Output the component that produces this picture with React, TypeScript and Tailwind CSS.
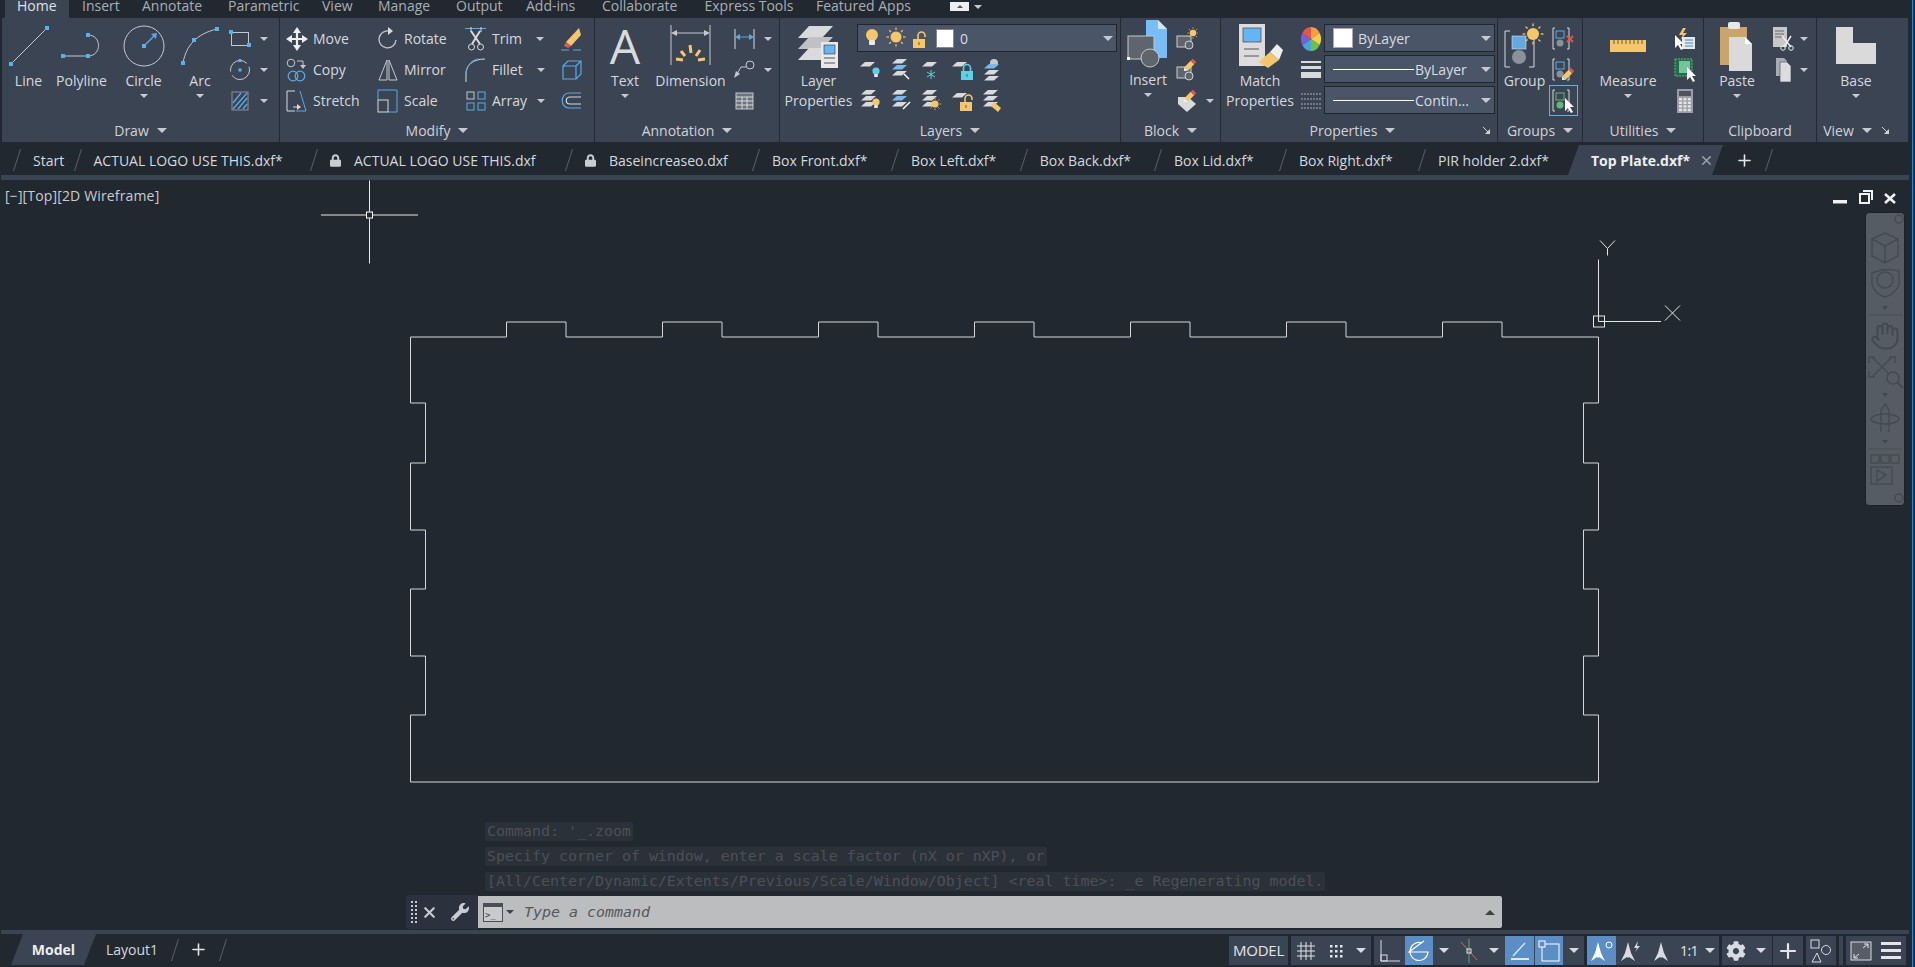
import React from "react";
import { Hand, Plus, X } from "lucide-react";
import { FaCog, FaLock, FaWrench } from "react-icons/fa";

const GRAY = "#c4c8ce";
const LIGHT = "#d9dadc";
const BLUE = "#5aa9e6";
const YEL = "#f6c66b";

const Svg = ({ w, h, children }: { w: number; h: number; children: React.ReactNode }) => (
  <svg width={w} height={h} viewBox={`0 0 ${w} ${h}`} fill="none" className="block shrink-0">
    {children}
  </svg>
);

const Grip = ({ x, y }: { x: number; y: number }) => <rect x={x - 2} y={y - 2} width={4} height={4} fill="#58b0ee" />;

const caretSizes = {
  3: "border-x-[3px] border-t-[3px]",
  4: "border-x-[4px] border-t-[4px]",
  5: "border-x-[5px] border-t-[5px]",
};

const Caret = ({ className = "", size = 4, tone = "border-t-[#c6cad0]" }: { className?: string; size?: 3 | 4 | 5; tone?: string }) => (
  <span className={`inline-block shrink-0 w-0 h-0 border-x-transparent ${caretSizes[size]} ${tone} ${className}`} />
);

// ---- layer bits
const Sheet = ({ x, y, fill = LIGHT }: { x: number; y: number; fill?: string }) => (
  <polygon points={`${x + 5},${y} ${x + 15},${y} ${x + 10},${y + 4.5} ${x},${y + 4.5}`} fill={fill} />
);
const Bulb = ({ x, y, c = YEL, s = 1 }: { x: number; y: number; c?: string; s?: number }) => (
  <g transform={`translate(${x} ${y}) scale(${s})`}>
    <circle cx="0" cy="0" r="6" fill={c} />
    <rect x="-3" y="5" width="6" height="5" rx="1" fill="#e8e8e8" />
  </g>
);
const Sun = ({ x, y, s = 1 }: { x: number; y: number; s?: number }) => (
  <g transform={`translate(${x} ${y}) scale(${s})`} stroke={YEL} strokeWidth="1.2">
    <circle r="5.5" fill={YEL} stroke="none" />
    {[0, 45, 90, 135, 180, 225, 270, 315].map((a) => (
      <line key={a} x1="7" x2="9.5" transform={`rotate(${a})`} />
    ))}
  </g>
);
const Padlock = ({ x, y, c = YEL, open = true }: { x: number; y: number; c?: string; open?: boolean }) => (
  <g transform={`translate(${x} ${y})`}>
    <path d={open ? "M4 6V2.5a3.5 3.5 0 0 1 7 0V4" : "M1.5 6V3a3.5 3.5 0 0 1 7 0V6"} stroke={c} strokeWidth="1.6" />
    <rect x="-1" y="6" width="12" height="9" fill={c} />
    <rect x="4.5" y="9" width="1" height="3" fill="#6b5a2f" />
  </g>
);
const Stack = ({ x, y, top = LIGHT, mid = LIGHT }: { x: number; y: number; top?: string; mid?: string }) => (
  <g>
    <Sheet x={x} y={y} fill={top} />
    <Sheet x={x} y={y + 6} fill={mid} />
    <Sheet x={x} y={y + 12} />
  </g>
);
const Cursor = ({ x, y, c = "#fff" }: { x: number; y: number; c?: string }) => (
  <polygon points={`${x},${y} ${x},${y + 13} ${x + 3},${y + 10} ${x + 6},${y + 15} ${x + 8},${y + 14} ${x + 5},${y + 9} ${x + 9},${y + 9}`} fill={c} />
);
const PencilTip = ({ x, y }: { x: number; y: number }) => (
  <g transform={`translate(${x} ${y}) rotate(45)`}>
    <rect x="-2.5" y="-2" width="5" height="9" fill={YEL} />
    <rect x="-2.5" y="-5" width="5" height="3" fill="#e2574c" />
    <polygon points="-2.5,7 2.5,7 0,10" fill="#eee" />
  </g>
);

// ---- ribbon icons, large
const LineIcon = () => (
  <Svg w={40} h={42}>
    <line x1="2" y1="39" x2="38" y2="3" stroke={GRAY} />
    <Grip x={2} y={39} />
    <Grip x={38} y={3} />
  </Svg>
);
const PolylineIcon = () => (
  <Svg w={44} h={28}>
    <path d="M3 24H28C42 24 42 3 28 3" stroke={GRAY} />
    <Grip x={3} y={24} />
    <Grip x={28} y={24} />
    <Grip x={28} y={3} />
  </Svg>
);
const CircleIcon = () => (
  <Svg w={42} h={42}>
    <circle cx="21" cy="21" r="20" stroke={GRAY} />
    <line x1="21" y1="21" x2="32" y2="10" stroke={BLUE} strokeWidth="1.4" />
    <Grip x={21} y={21} />
    <polygon points="34,8 33,14 28,9" fill={BLUE} />
  </Svg>
);
const ArcIcon = () => (
  <Svg w={40} h={40}>
    <path d="M3 37C6 20 16 8 37 3" stroke={GRAY} />
    <Grip x={3} y={37} />
    <Grip x={14} y={14} />
    <Grip x={37} y={3} />
  </Svg>
);
const RectIcon = () => (
  <Svg w={22} h={18}>
    <rect x="2.5" y="2.5" width="17" height="13" stroke={GRAY} />
    <Grip x={2} y={2} />
    <Grip x={20} y={15} />
  </Svg>
);
const DotCircleIcon = () => (
  <Svg w={22} h={22}>
    <circle cx="11" cy="11" r="9.5" stroke={GRAY} strokeDasharray="24 4" />
    <rect x="9.5" y="9.5" width="3" height="3" fill="#58b0ee" />
    <rect x="9.5" y="0" width="3" height="3" fill="#58b0ee" />
  </Svg>
);
const HatchIcon = () => (
  <Svg w={22} h={24}>
    <rect x="3" y="3" width="16" height="18" stroke="#8b919a" />
    <path d="M4 14L12 4M4 20L18 4M9 20L18 9M14 20L18 15" stroke={BLUE} strokeWidth="1.4" />
  </Svg>
);
const MoveIcon = () => (
  <Svg w={22} h={24}>
    <path d="M11 3V21M2 12H20" stroke="#eceef0" strokeWidth="2.2" />
    <polygon points="11,0 15,6 7,6" fill="#eceef0" />
    <polygon points="11,24 15,18 7,18" fill="#eceef0" />
    <polygon points="0,12 6,8 6,16" fill="#eceef0" />
    <polygon points="22,12 16,8 16,16" fill="#eceef0" />
  </Svg>
);
const RotateIcon = () => (
  <Svg w={20} h={24}>
    <path d="M11 4A8.5 8.5 0 1 0 18 13" stroke={GRAY} strokeWidth="1.3" />
    <polygon points="10,0 15,4 10,8" fill={LIGHT} />
  </Svg>
);
const TrimIcon = () => (
  <Svg w={22} h={24}>
    <path d="M0 1.5H21" stroke={BLUE} />
    <path d="M6 0V5M16 0V5" stroke={LIGHT} />
    <path d="M6 4L15 17M15 4L7 17" stroke={LIGHT} strokeWidth="2" />
    <circle cx="6.5" cy="20" r="3" stroke={LIGHT} />
    <circle cx="15.5" cy="20" r="3" stroke={LIGHT} />
  </Svg>
);
const EraserIcon = () => (
  <Svg w={22} h={24}>
    <polygon points="5,15 18,1 20,8 10,19" fill={YEL} />
    <polygon points="5,15 10,19 7,21 3,19" fill="#e2574c" />
    <path d="M0 23H8M12 23H20" stroke={BLUE} />
  </Svg>
);
const CopyIcon = () => (
  <Svg w={22} h={24}>
    <circle cx="5" cy="5" r="3.8" stroke={GRAY} />
    <path d="M11 3H17V8" stroke={GRAY} />
    <polygon points="14,7 20,7 17,11" fill={GRAY} />
    <circle cx="7" cy="18" r="4.8" stroke={BLUE} strokeWidth="1.3" />
    <circle cx="14" cy="18" r="4.8" stroke={BLUE} strokeWidth="1.3" />
  </Svg>
);
const MirrorIcon = () => (
  <Svg w={20} h={22}>
    <polygon points="9,1 9,21 1,21" stroke={GRAY} />
    <polygon points="11,1 11,21 19,21" stroke={GRAY} />
  </Svg>
);
const StretchIcon = () => (
  <Svg w={22} h={24}>
    <path d="M9 2H1V22H9" stroke={LIGHT} />
    <path d="M14 2L20 22H10" stroke={BLUE} />
    <path d="M7 18H12" stroke={LIGHT} />
    <polygon points="15,18 11,15 11,21" fill={LIGHT} />
  </Svg>
);
const ScaleIcon = () => (
  <Svg w={22} h={24}>
    <path d="M1 11V1H20V23H11" stroke={BLUE} />
    <rect x="1" y="11" width="10" height="12" stroke={LIGHT} />
  </Svg>
);
const FilletIcon = () => (
  <Svg w={22} h={24}>
    <path d="M1 24V16C1 7 8 1 20 1" stroke={LIGHT} />
    <path d="M1 16C1 7 8 1 14 1" stroke={BLUE} />
  </Svg>
);
const ArrayIcon = () => (
  <Svg w={20} h={20}>
    {[0, 11].map((x) =>
      [0, 11].map((y) => <rect key={`${x}${y}`} x={x + 1} y={y + 1} width="7" height="7" stroke={x === 0 && y === 0 ? GRAY : BLUE} />)
    )}
  </Svg>
);
const BoxIcon = () => (
  <Svg w={22} h={22}>
    <path d="M2 7H15V20H2ZM2 7L7 2H20V15L15 20M15 7L20 2" stroke={BLUE} strokeWidth="1.2" />
  </Svg>
);
const OffsetIcon = () => (
  <Svg w={22} h={18}>
    <path d="M20 1H8C-1 1 -1 16 8 16H20" stroke={BLUE} strokeWidth="1.2" />
    <path d="M20 5H9C4 5 4 12 9 12H20" stroke={LIGHT} strokeWidth="1.2" />
  </Svg>
);
const TextIcon = () => (
  <Svg w={40} h={48}>
    <text x="20" y="41.5" textAnchor="middle" fontSize="48" fill={LIGHT}>
      A
    </text>
  </Svg>
);
const DimensionIcon = () => (
  <Svg w={42} h={42}>
    <path d="M1 0V40M40 0V40" stroke={GRAY} />
    <path d="M3 8H38" stroke={GRAY} />
    <polygon points="1,8 7,5 7,11" fill={GRAY} />
    <polygon points="40,8 34,5 34,11" fill={GRAY} />
    <path d="M20 20L21 28M11 26L15 31M30 25L26 31M6 34L13 35M35 34L28 35" stroke={YEL} strokeWidth="3" />
  </Svg>
);
const DimSmall = () => (
  <Svg w={22} h={20}>
    <path d="M1 0V20M20 0V20" stroke={LIGHT} />
    <path d="M3 8H18" stroke={BLUE} />
    <polygon points="1,8 6,5 6,11" fill={BLUE} />
    <polygon points="20,8 15,5 15,11" fill={BLUE} />
  </Svg>
);
const LeaderIcon = () => (
  <Svg w={22} h={20}>
    <circle cx="16" cy="5" r="4" stroke={GRAY} />
    <path d="M12 7H7L3 14" stroke={GRAY} />
    <polygon points="0,18 2,11 6,14" fill={GRAY} />
  </Svg>
);
const TableIcon = () => (
  <Svg w={20} h={18}>
    <rect x="1" y="1" width="17" height="16" fill="#6d737d" stroke={GRAY} />
    <path d="M1 5H18M1 9H18M1 13H18M7 5V17M12 5V17" stroke={LIGHT} />
  </Svg>
);
const LayerPropsIcon = () => (
  <Svg w={42} h={44}>
    <polygon points="11,2 35,2 24,14 0,14" fill={LIGHT} />
    <polygon points="11,13 35,13 24,25 0,25" fill="#bfc1c4" />
    <polygon points="11,24 35,24 24,36 0,36" fill={LIGHT} />
    <rect x="23" y="18" width="17" height="26" fill="#e8e8e8" />
    <rect x="26" y="21" width="11" height="9" fill="#64b5f6" stroke="#333" strokeWidth="0.6" />
    <path d="M26 34H37M26 39H37" stroke="#555" />
  </Svg>
);
const InsertIcon = () => (
  <Svg w={42} h={50}>
    <polygon points="19,0 31,0 40,9 40,38 19,38" fill="#78bdf5" />
    <polygon points="31,0 40,9 31,9" fill="#cfe8fb" />
    <rect x="1" y="16" width="26" height="23" fill="#5f656f" stroke="#c8c8c8" />
    <circle cx="23" cy="38" r="9" fill="#5f656f" stroke="#c8c8c8" />
    <rect x="0" y="37" width="3" height="3" fill="#fff" />
  </Svg>
);
const BlockSmall = ({ kind }: { kind: "star" | "edit" | "tag" }) => (
  <Svg w={22} h={24}>
    {kind === "tag" ? (
      <polygon points="2,8 12,8 20,15 11,23 2,15" fill={LIGHT} />
    ) : (
      <>
        <rect x="1" y="9" width="14" height="11" fill="#5f656f" stroke="#cfcfcf" />
        <circle cx="13" cy="18" r="4" fill="#5f656f" stroke="#cfcfcf" />
      </>
    )}
    {kind === "star" && <Sun x={17} y={6} s={0.6} />}
    {kind !== "star" && <PencilTip x={15} y={6} />}
  </Svg>
);
const MatchIcon = () => (
  <Svg w={46} h={44}>
    <rect x="2" y="0" width="26" height="42" fill="#dcdcdc" />
    <rect x="6" y="4" width="18" height="14" fill="#64b5f6" stroke="#444" strokeWidth="0.7" />
    <path d="M7 25H22M7 32H22" stroke="#555" />
    <polygon points="22,38 33,28 42,36 31,44" fill={YEL} />
    <polygon points="33,28 40,20 46,26 42,36" fill="#eee" />
  </Svg>
);
const WheelIcon = () => (
  <Svg w={22} h={24}>
    {["#f6a13c", "#f4d14a", "#6cc24a", "#4aa3df", "#7a5fd0", "#e2574c"].map((c, i) => {
      const a = (i * Math.PI) / 3 - Math.PI / 2;
      const b = a + Math.PI / 3;
      return <path key={c} d={`M11 12L${11 + 10 * Math.cos(a)} ${12 + 12 * Math.sin(a)}A10 12 0 0 1 ${11 + 10 * Math.cos(b)} ${12 + 12 * Math.sin(b)}Z`} fill={c} />;
    })}
  </Svg>
);
const WeightIcon = () => (
  <Svg w={20} h={20}>
    <rect x="0" y="1" width="20" height="2" fill={LIGHT} />
    <rect x="0" y="6" width="20" height="3" fill={LIGHT} />
    <rect x="0" y="12" width="20" height="6" fill={LIGHT} />
  </Svg>
);
const LinetypeIcon = () => (
  <Svg w={20} h={16}>
    <path d="M0 1H20M0 6H20M0 11H20M0 15H20" stroke="#a9adb3" strokeDasharray="2 1" />
  </Svg>
);
const GroupIcon = () => (
  <Svg w={42} h={46}>
    <path d="M6 8H1V44H6M25 8H30V44H25" stroke={LIGHT} />
    <rect x="8" y="13" width="14" height="13" fill="#64a9e0" stroke="#cfe3f3" strokeWidth="0.6" />
    <circle cx="15" cy="34" r="7" fill="#8b919a" />
    <Sun x={29} y={11} s={1.1} />
  </Svg>
);
const GroupSmall = ({ mark }: { mark: "x" | "pen" | "cur" }) => {
  const blue = mark === "cur" ? "#5fb878" : BLUE;
  return (
    <Svg w={22} h={24}>
      <path d="M3 1H1V22H3M15 1H17V22H15" stroke={LIGHT} />
      <rect x="4" y="4" width="8" height="7" stroke={blue} fill="#3b4453" />
      <circle cx="8" cy="16" r="3.5" fill={mark === "cur" ? "#5fb878" : "#8b919a"} />
      {mark === "x" && <path d="M15 9L21 15M21 9L15 15" stroke="#e2574c" strokeWidth="1.8" />}
      {mark === "pen" && <PencilTip x={17} y={15} />}
      {mark === "cur" && <Cursor x={13} y={9} />}
    </Svg>
  );
};
const RulerIcon = () => (
  <Svg w={36} h={12}>
    <rect x="0" y="0" width="36" height="12" fill={YEL} />
    <path d="M4 0V4M8 0V4M12 0V4M16 0V4M20 0V4M24 0V4M28 0V4M32 0V4" stroke="#6e5a2b" />
  </Svg>
);
const QuickSelect = () => (
  <Svg w={22} h={24}>
    <polygon points="9,1 5,8 9,8 6,13 13,6 9,6 12,1" fill={YEL} />
    <rect x="8" y="10" width="13" height="12" fill="#e8e8e8" />
    <path d="M11 13H19M11 16H19M11 19H19" stroke="#3f87c5" />
    <Cursor x={1} y={8} />
  </Svg>
);
const AreaIcon = () => (
  <Svg w={22} h={24}>
    <rect x="1" y="1" width="17" height="17" fill="#1f6f47" stroke="#5fb878" strokeDasharray="2 1" />
    <rect x="5" y="3" width="11" height="12" fill="#7ac29a" />
    <Cursor x={13} y={9} />
  </Svg>
);
const CalcIcon = () => (
  <Svg w={16} h={24}>
    <rect x="0" y="0" width="16" height="24" fill="#9a9ea5" />
    <rect x="2" y="2" width="12" height="5" fill="#4f545c" />
    {[0, 1, 2].map((c) => [0, 1, 2, 3].map((r) => <rect key={`${c}${r}`} x={2 + c * 4.4} y={9 + r * 3.6} width="3" height="2.4" fill="#e4e4e4" />))}
  </Svg>
);
const PasteIcon = () => (
  <Svg w={34} h={50}>
    <rect x="0" y="6" width="27" height="38" fill="#c9a56b" />
    <rect x="8" y="1" width="12" height="7" rx="2" fill="#e8e8e8" />
    <polygon points="9,16 25,16 32,23 32,50 9,50" fill="#dadada" />
    <polygon points="25,16 32,23 25,23" fill="#fff" />
  </Svg>
);
const CutIcon = () => (
  <Svg w={22} h={24}>
    <rect x="0" y="0" width="14" height="20" fill="#c8c8c8" />
    <path d="M2 4H11M2 7H11M2 10H9" stroke="#666" />
    <path d="M9 9L18 20M18 9L11 20" stroke="#eee" strokeWidth="1.5" />
    <circle cx="10" cy="21" r="2.3" stroke="#eee" />
    <circle cx="18" cy="21" r="2.3" stroke="#eee" />
  </Svg>
);
const CopyClipIcon = () => (
  <Svg w={18} h={24}>
    <polygon points="1,0 9,0 12,3 12,18 1,18" fill="#a9adb3" />
    <polygon points="5,4 12,4 16,8 16,24 5,24" fill="#dcdcdc" stroke="#3b4453" strokeWidth="0.6" />
  </Svg>
);
const BaseIcon = () => (
  <Svg w={40} h={37}>
    <polygon points="0,0 17,0 17,16 40,16 40,37 0,37" fill="#dadada" />
  </Svg>
);
const Launcher = () => (
  <Svg w={9} h={9}>
    <path d="M1 1L7 7" stroke="#cfd3d9" />
    <polygon points="8,3 8,8 3,8" fill="#cfd3d9" />
  </Svg>
);

// ---- ribbon layout helpers
const Big = ({ w, icon, lines, caret, box = "h-[51px]" }: { w: string; icon: React.ReactNode; lines: string[]; caret?: boolean; box?: string }) => (
  <div className={`${w} shrink-0 flex flex-col items-center pt-[2px]`}>
    <div className={`${box} flex items-center justify-center`}>{icon}</div>
    {lines.map((l) => (
      <span key={l} className="leading-[20px] whitespace-nowrap">
        {l}
      </span>
    ))}
    {caret && <Caret className="mt-[3px]" />}
  </div>
);

const Rows = ({ className = "", children }: { className?: string; children: React.ReactNode }) => (
  <div className={`shrink-0 flex flex-col pt-[5px] ${className}`}>{children}</div>
);
const Row = ({ className = "", children }: { className?: string; children?: React.ReactNode }) => (
  <div className={`h-[31px] flex items-center ${className}`}>{children}</div>
);
const Tool = ({ icon, label, caret = "" }: { icon: React.ReactNode; label: string; caret?: string }) => (
  <Row>
    <div className="w-[25px] flex justify-center">{icon}</div>
    <span className="ml-[4px] whitespace-nowrap">{label}</span>
    {caret && <Caret className={caret} />}
  </Row>
);

const Panel = ({ w, title, arrow = true, titleClass = "", launcher = "", children }: { w: string; title: string; arrow?: boolean; titleClass?: string; launcher?: string; children: React.ReactNode }) => (
  <section className={`${w} shrink-0 h-full flex flex-col border-r border-[#232a33] relative`}>
    <div className="h-[100px] flex">{children}</div>
    <div className={`h-[24px] flex items-center justify-center gap-[8px] text-[#cfd3d9] ${titleClass}`}>
      <span>{title}</span>
      {arrow && <Caret size={5} />}
    </div>
    {launcher && (
      <div className={`absolute top-[108px] ${launcher}`}>
        <Launcher />
      </div>
    )}
  </section>
);

const Dropdown = ({ children }: { children: React.ReactNode }) => (
  <div className="h-[28px] bg-[#4a5568] border border-[#1f2630] flex items-center pl-[8px] pr-[3px] text-[#d9dce0]">
    {children}
    <Caret className="ml-auto" size={5} />
  </div>
);
const LineSample = () => <span className="w-[81px] h-px bg-white shrink-0" />;

const Slash = ({ h = 22 }: { h?: number }) => (
  <svg width={8} height={h} viewBox={`0 0 8 ${h}`} className="block shrink-0">
    <line x1="0.5" y1={h} x2="7.5" y2="0" stroke="#59616d" />
  </svg>
);

const menuTabs: [string, string][] = [
  ["Insert", "w-[60px]"],
  ["Annotate", "w-[86px]"],
  ["Parametric", "w-[94px]"],
  ["View", "w-[56px]"],
  ["Manage", "w-[78px]"],
  ["Output", "w-[70px]"],
  ["Add-ins", "w-[76px]"],
  ["Collaborate", "w-[102.5px]"],
  ["Express Tools", "w-[111.5px]"],
  ["Featured Apps", "w-[134px]"],
];

const MenuBar = () => (
  <div className="h-[18px] flex items-start overflow-hidden pl-[5px] text-[#a9aeb6]">
    <div className="w-[64px] h-[18px] bg-[#3b4453] pl-[12px] leading-[12px] text-[#dfe2e6]">Home</div>
    <div className="ml-[13px] flex">
      {menuTabs.map(([t, w]) => (
        <span key={t} className={`${w} leading-[12px] whitespace-nowrap`}>
          {t}
        </span>
      ))}
    </div>
    <div className="mt-[2px] w-[19px] h-[9px] bg-[#eceef0] flex items-center justify-center">
      <Caret className="rotate-180" size={3} tone="border-t-[#555]" />
    </div>
    <Caret className="ml-[5px] mt-[5px]" />
  </div>
);

const Ribbon = () => (
  <div className="h-[124px] ml-[2px] w-[1906px] bg-[#3b4453] flex text-[#d5d9de]">
    <Panel w="w-[278px]" title="Draw">
      <div className="w-[2px]" />
      <Big w="w-[49px]" icon={<LineIcon />} lines={["Line"]} />
      <Big w="w-[57px]" icon={<PolylineIcon />} lines={["Polyline"]} />
      <Big w="w-[67px]" icon={<CircleIcon />} lines={["Circle"]} caret />
      <Big w="w-[46px]" icon={<ArcIcon />} lines={["Arc"]} caret />
      <Rows className="w-[54px] pl-[4px]">
        <Row><div className="w-[26px] flex justify-center"><RectIcon /></div><Caret className="ml-[7px]" /></Row>
        <Row><div className="w-[26px] flex justify-center"><DotCircleIcon /></div><Caret className="ml-[7px]" /></Row>
        <Row><div className="w-[26px] flex justify-center"><HatchIcon /></div><Caret className="ml-[7px]" /></Row>
      </Rows>
    </Panel>
    <Panel w="w-[315px]" title="Modify">
      <Rows className="w-[93px] pl-[4px]">
        <Tool icon={<MoveIcon />} label="Move" />
        <Tool icon={<CopyIcon />} label="Copy" />
        <Tool icon={<StretchIcon />} label="Stretch" />
      </Rows>
      <Rows className="w-[90px] pl-[2px]">
        <Tool icon={<RotateIcon />} label="Rotate" />
        <Tool icon={<MirrorIcon />} label="Mirror" />
        <Tool icon={<ScaleIcon />} label="Scale" />
      </Rows>
      <Rows className="w-[97px]">
        <Tool icon={<TrimIcon />} label="Trim" caret="ml-[14px]" />
        <Tool icon={<FilletIcon />} label="Fillet" caret="ml-[14px]" />
        <Tool icon={<ArrayIcon />} label="Array" caret="ml-[10px]" />
      </Rows>
      <Rows className="w-[24px] items-center">
        <Row><EraserIcon /></Row>
        <Row><BoxIcon /></Row>
        <Row><OffsetIcon /></Row>
      </Rows>
    </Panel>
    <Panel w="w-[185px]" title="Annotation">
      <Big w="w-[60px]" icon={<TextIcon />} lines={["Text"]} caret />
      <Big w="w-[71px]" icon={<DimensionIcon />} lines={["Dimension"]} />
      <Rows className="w-[53px] pl-[7px]">
        <Row><div className="w-[24px] flex justify-center"><DimSmall /></div><Caret className="ml-[7px]" /></Row>
        <Row><div className="w-[24px] flex justify-center"><LeaderIcon /></div><Caret className="ml-[7px]" /></Row>
        <Row><div className="w-[24px] flex justify-center"><TableIcon /></div></Row>
      </Rows>
    </Panel>
    <Panel w="w-[341px]" title="Layers">
      <Big w="w-[77px]" icon={<LayerPropsIcon />} lines={["Layer", "Properties"]} />
      <div className="w-[260px] pt-[6px]">
        <Dropdown>
          <Svg w={69} h={24}>
            <Bulb x={6} y={9} />
            <Sun x={30} y={11} />
            <Padlock x={48} y={7} />
          </Svg>
          <span className="ml-[1px] w-[18px] h-[19px] bg-white border border-[#888]" />
          <span className="ml-[6px]">0</span>
        </Dropdown>
        <div className="mt-[2px] pl-[2px] flex flex-col gap-[1px]">
          <div className="h-[30px] flex items-center gap-[7.5px]">
            <Svg w={23} h={24}><Sheet x={1} y={5} /><Bulb x={17} y={14} c="#5cd0e6" s={0.6} /></Svg>
            <Svg w={23} h={24}><Stack x={2} y={2} mid="#7ab8ec" /><path d="M14 17L19 22" stroke="#fff" strokeWidth="1.4" /></Svg>
            <Svg w={23} h={24}><Sheet x={2} y={5} /><path d="M11 13V22M7 15L15 20M15 15L7 20" stroke="#5cd0e6" /></Svg>
            <Svg w={23} h={24}><Sheet x={1} y={5} /><Padlock x={11} y={8} c="#5cd0e6" open={false} /></Svg>
            <Svg w={23} h={24}><circle cx="13" cy="6" r="4" fill="#c8c8c8" /><Stack x={3} y={7} top="#7ab8ec" /></Svg>
          </div>
          <div className="h-[30px] flex items-center gap-[7.5px]">
            <Svg w={23} h={24}><Stack x={2} y={2} /><Bulb x={17} y={14} s={0.6} /></Svg>
            <Svg w={23} h={24}><Stack x={2} y={2} mid="#7ab8ec" /><path d="M13 21L20 14" stroke="#fff" strokeWidth="1.4" /></Svg>
            <Svg w={23} h={24}><Stack x={2} y={2} /><Sun x={15} y={16} s={0.65} /></Svg>
            <Svg w={23} h={24}><Sheet x={1} y={5} /><Padlock x={10} y={8} /></Svg>
            <Svg w={23} h={24}><Stack x={2} y={2} /><polygon points="13,14 20,20 17,24 10,18" fill={YEL} /></Svg>
          </div>
        </div>
      </div>
    </Panel>
    <Panel w="w-[100px]" title="Block">
      <Big w="w-[54px]" icon={<InsertIcon />} lines={["Insert"]} caret box="h-[50px]" />
      <Rows className="w-[46px]">
        <Row><div className="w-[24px] flex justify-center"><BlockSmall kind="star" /></div></Row>
        <Row><div className="w-[24px] flex justify-center"><BlockSmall kind="edit" /></div></Row>
        <Row><div className="w-[24px] flex justify-center"><BlockSmall kind="tag" /></div><Caret className="ml-[7px]" /></Row>
      </Rows>
    </Panel>
    <Panel w="w-[277px]" title="Properties" titleClass="pr-[13px]" launcher="right-[6px]">
      <Big w="w-[78px]" icon={<MatchIcon />} lines={["Match", "Properties"]} />
      <Rows className="w-[24px] items-center">
        <Row><WheelIcon /></Row>
        <Row><WeightIcon /></Row>
        <Row><LinetypeIcon /></Row>
      </Rows>
      <div className="ml-[1px] w-[171px] pt-[6px] flex flex-col gap-[3px]">
        <Dropdown>
          <span className="w-[20px] h-[20px] bg-white border border-[#aaa]" />
          <span className="ml-[5px]">ByLayer</span>
        </Dropdown>
        <Dropdown>
          <LineSample />
          <span className="ml-[1px]">ByLayer</span>
        </Dropdown>
        <Dropdown>
          <LineSample />
          <span className="ml-[1px]">Contin...</span>
        </Dropdown>
      </div>
    </Panel>
    <Panel w="w-[85px]" title="Groups">
      <Big w="w-[53px]" icon={<GroupIcon />} lines={["Group"]} />
      <Rows className="-ml-[8px] w-[40px] items-center">
        <Row><GroupSmall mark="x" /></Row>
        <Row><GroupSmall mark="pen" /></Row>
        <Row className="w-[29px] border border-[#63aef0] justify-center"><GroupSmall mark="cur" /></Row>
      </Rows>
    </Panel>
    <Panel w="w-[121px]" title="Utilities">
      <Big w="w-[90px]" icon={<RulerIcon />} lines={["Measure"]} caret />
      <Rows className="w-[24px] items-center">
        <Row><QuickSelect /></Row>
        <Row><AreaIcon /></Row>
        <Row><CalcIcon /></Row>
      </Rows>
    </Panel>
    <Panel w="w-[113px]" title="Clipboard" arrow={false}>
      <Big w="w-[66px]" icon={<PasteIcon />} lines={["Paste"]} caret />
      <Rows className="w-[47px]">
        <Row><div className="w-[28px] flex justify-center"><CutIcon /></div><Caret className="ml-[2px]" /></Row>
        <Row><div className="w-[28px] flex justify-center"><CopyClipIcon /></div><Caret className="ml-[2px]" /></Row>
      </Rows>
    </Panel>
    <Panel w="w-[92px]" title="View" titleClass="pr-[30px]" launcher="right-[18px]">
      <Big w="w-[78px]" icon={<BaseIcon />} lines={["Base"]} caret />
    </Panel>
  </div>
);

const fileTabs: { name: string; w: string; locked?: boolean }[] = [
  { name: "Start", w: "w-[60.5px]" },
  { name: "ACTUAL LOGO USE THIS.dxf*", w: "w-[236.5px]" },
  { name: "ACTUAL LOGO USE THIS.dxf", w: "w-[255px]", locked: true },
  { name: "Baseincreaseo.dxf", w: "w-[187px]", locked: true },
  { name: "Box Front.dxf*", w: "w-[139px]" },
  { name: "Box Left.dxf*", w: "w-[128.7px]" },
  { name: "Box Back.dxf*", w: "w-[134.3px]" },
  { name: "Box Lid.dxf*", w: "w-[125px]" },
  { name: "Box Right.dxf*", w: "w-[139px]" },
  { name: "PIR holder 2.dxf*", w: "w-[150px]" },
];

const FileTabs = () => (
  <div className="h-[33px] pl-[13px] pt-[3px] flex items-center text-[#d5d9de]">
    {fileTabs.map((t) => (
      <div key={t.name + t.w} className={`${t.w} shrink-0 flex items-center`}>
        <Slash />
        {t.locked ? (
          <>
            <FaLock className="ml-[12px] w-[11px] h-[13px] text-[#c9cdd2]" />
            <span className="ml-[13px] whitespace-nowrap">{t.name}</span>
          </>
        ) : (
          <span className="ml-[12px] whitespace-nowrap">{t.name}</span>
        )}
      </div>
    ))}
    <div className="w-[155px] h-[30px] shrink-0 bg-[#3b4453] flex items-center pl-[23px] [clip-path:polygon(11px_0,100%_0,calc(100%-11px)_100%,0_100%)]">
      <span className="font-bold text-[#eceef0] whitespace-nowrap">Top Plate.dxf*</span>
      <X size={15} strokeWidth={2.5} className="ml-[9px] text-[#9aa0a8]" />
    </div>
    <Plus size={19} strokeWidth={2} className="ml-[12px] text-[#e4e6e9]" />
    <div className="ml-[11px]"><Slash /></div>
  </div>
);

const tabTopY = 321;
const tabsX = [0, 1, 2, 3, 4, 5, 6].map((i) => 506.5 + i * 156);
const leftNotches: [number, number][] = [[402.5, 462.5], [529.5, 588.5], [655.5, 714.5]];

// outline of the plate, clockwise from the top left corner
const platePath = () => {
  let d = "M410.5 336.5";
  tabsX.forEach((x) => {
    d += `H${x}V${tabTopY}.5H${x + 59.5}V336.5`;
  });
  d += "H1598.5";
  leftNotches.forEach(([a, b]) => {
    d += `V${a}H1583.5V${b}H1598.5`;
  });
  d += "V781.5H410.5";
  [...leftNotches].reverse().forEach(([a, b]) => {
    d += `V${b}H425.5V${a}H410.5`;
  });
  return d + "Z";
};

const Drawing = () => (
  <svg viewBox="0 180 1912 749" className="absolute inset-0 w-full h-full" fill="none">
    <path d={platePath()} stroke="#d4d6d9" />
    {/* crosshair */}
    <path d="M321 214.5H366M372 214.5H418M369.5 180V211M369.5 218V263" stroke="#e8e9ea" />
    <rect x="366.5" y="211.5" width="6" height="6" stroke="#fff" />
    {/* UCS icon */}
    <rect x="1593.5" y="315.5" width="11" height="11" stroke="#e4e5e7" />
    <path d="M1598.5 259V321H1661" stroke="#e4e5e7" />
    <path d="M1600 240L1607.5 248L1615 240M1607.5 248V255" stroke="#e4e5e7" />
    <path d="M1665 305L1680 320M1680 305L1665 320" stroke="#e4e5e7" />
  </svg>
);

const NavBar = () => (
  <div className="absolute right-[7px] top-[32px] w-[40px] h-[294px] bg-[#565c63] rounded-[4px] border border-[#1c2127] flex flex-col items-center text-[#43494f]">
    <Svg w={38} h={290}>
      <g stroke="#454b52" strokeWidth="1.5">
        <circle cx="33" cy="6" r="4" />
        <path d="M6 26L19 20L32 26V43L19 50L6 43Z M6 26L19 33L32 26M19 33V50" />
        <path d="M6 60Q19 54 33 58V72Q28 82 19 84Q10 82 6 72Z" />
        <circle cx="19" cy="67" r="8" />
        <path d="M2 102H36M2 236H36" strokeWidth="0.8" />
        <path d="M6 144L26 164M26 144L6 164" />
        <path d="M3 150V144H9M23 144H29V150M3 158V164H9" />
        <circle cx="27" cy="165" r="6" fill="#565c63" />
        <path d="M31 169L37 175" strokeWidth="2" />
        <path d="M15 197L19 191L23 197M15 219V197M23 219V197" />
        <ellipse cx="19" cy="206" rx="14" ry="5" />
        <rect x="5" y="242" width="8" height="8" />
        <rect x="15" y="242" width="8" height="8" />
        <rect x="25" y="242" width="8" height="8" />
        <rect x="5" y="254" width="21" height="17" />
        <polygon points="11,257 11,268 20,262" />
        <circle cx="33" cy="285" r="4" />
      </g>
      <polygon points="16,93 22,93 19,97" fill="#43494f" />
      <polygon points="16,180 22,180 19,184" fill="#43494f" />
      <polygon points="16,227 22,227 19,231" fill="#43494f" />
    </Svg>
    <div className="absolute left-[4px] top-[108px]">
      <Hand size={30} strokeWidth={1.5} />
    </div>
  </div>
);

const history = [
  "Command: '_.zoom",
  "Specify corner of window, enter a scale factor (nX or nXP), or",
  "[All/Center/Dynamic/Extents/Previous/Scale/Window/Object] <real time>: _e Regenerating model.",
];

const CommandLine = () => (
  <div className="absolute left-[406px] top-[642px] flex flex-col font-['DejaVu_Sans_Mono',monospace] text-[14.95px]">
    <div className="ml-[79px] flex flex-col items-start gap-[6px]">
      {history.map((l) => (
        <div key={l} className="h-[19px] leading-[19px] px-[2px] rounded-[2px] bg-[#2b3139] text-[#4b5058] whitespace-nowrap">
          {l}
        </div>
      ))}
    </div>
    <div className="mt-[4px] h-[34px] flex">
      <div className="w-[72px] h-[34px] bg-[#2b323d] rounded-l-[3px] flex items-center text-[#c8cbd0]">
        <div className="ml-[5px] w-[6px] h-[22px] border-x-2 border-dotted border-[#c8cbd0]" />
        <X size={17} strokeWidth={3} className="ml-[4px]" />
        <FaWrench className="ml-[13px] w-[18px] h-[18px]" />
      </div>
      <div className="mt-[1px] w-[1024px] h-[32px] bg-[#bcbdbf] rounded-r-[2px] flex items-center pl-[5px] pr-[6px] text-[#55585d] italic">
        <div className="w-[20px] h-[19px] bg-[#c9cacc] border border-[#4a4d52] border-t-[4px] flex items-end pl-[1px] not-italic text-[9px] leading-[11px] text-[#3c3f44]">{">_"}</div>
        <Caret className="ml-[3px]" tone="border-t-[#3f4247]" />
        <span className="ml-[10px]">Type a command</span>
        <Caret className="ml-auto mr-[1px] rotate-180" size={5} tone="border-t-[#3f4247]" />
      </div>
    </div>
  </div>
);

const Viewport = () => (
  <div className="flex-1 relative overflow-hidden">
    <Drawing />
    <span className="absolute left-[5px] top-[7px] leading-[18px] text-[#c9cdd2] tracking-[0.15px]">[−][Top][2D Wireframe]</span>
    <div className="absolute left-[1833px] top-[10px] flex items-start">
      <span className="mt-[10px] w-[14px] h-[4px] bg-[#f0f1f2] border-b border-[#888]" />
      <div className="ml-[12px]">
        <Svg w={14} h={14}>
          <path d="M4 1H13V10M1 4H10V13H1Z" stroke="#f0f1f2" strokeWidth="2" />
        </Svg>
      </div>
      <div className="ml-[10px] mt-[2px]">
        <Svg w={14} h={13}>
          <path d="M2 2L12 11M12 2L2 11" stroke="#f0f1f2" strokeWidth="2.6" />
        </Svg>
      </div>
    </div>
    <NavBar />
    <CommandLine />
  </div>
);

const Btn = ({ w = "w-[29px]", on = false, children }: { w?: string; on?: boolean; children?: React.ReactNode }) => (
  <div className={`${w} h-full shrink-0 flex items-center justify-center ${on ? "bg-[#5b8ec4]" : ""}`}>{children}</div>
);
const Group = ({ children }: { children: React.ReactNode }) => <div className="h-[29px] bg-[#3b4453] flex shrink-0">{children}</div>;
const StatusCaret = () => <Caret size={5} tone="border-t-[#d8dbdf]" />;

const Aircraft = ({ fill = "#d8dbdf" }: { fill?: string }) => (
  <polygon points="9,1 12,12 16,20 10,16 9,17 8,16 2,20 6,12" fill={fill} />
);

const StatusBar = () => (
  <div className="h-[33px] flex items-start text-[#e3e5e8]">
    <div className="flex items-center h-[31px]">
      <div className="ml-[11px] w-[85px] h-[31px] bg-[#3b4453] flex items-center justify-center font-bold text-[#eceef0] [clip-path:polygon(12px_0,100%_0,calc(100%-12px)_100%,0_100%)]">
        Model
      </div>
      <span className="ml-[10px] w-[65px] text-[#d5d9de]">Layout1</span>
      <Slash />
      <Plus size={19} strokeWidth={2} className="ml-[10px] text-[#e4e6e9]" />
      <div className="ml-[11px]"><Slash /></div>
    </div>
    <div className="ml-[1002px] mt-[2px] flex gap-[3px]">
      <Group>
        <Btn w="w-[59px]"><span className="text-[15px] tracking-[-0.2px]">MODEL</span></Btn>
      </Group>
      <Group>
        <Btn w="w-[30px]">
          <Svg w={20} h={20}><path d="M1 5H19M1 10H19M1 15H19M5 1V19M10 1V19M15 1V19" stroke="#e3e5e8" /></Svg>
        </Btn>
        <Btn w="w-[30px]">
          <Svg w={16} h={16}>
            {[2, 7, 12].map((x) => [2, 7, 12].map((y) => <rect key={`${x}${y}`} x={x} y={y} width="2.5" height="2.5" fill="#e3e5e8" />))}
          </Svg>
        </Btn>
        <Btn w="w-[20px]"><StatusCaret /></Btn>
      </Group>
      <Group>
        <Btn w="w-[31px]">
          <Svg w={20} h={22}><path d="M1 0V21H20" stroke="#d8dbdf" /><rect x="1" y="15" width="6" height="6" stroke="#d8dbdf" /></Svg>
        </Btn>
        <Btn w="w-[28px]" on>
          <Svg w={22} h={22}><path d="M14 3A9 9 0 1 0 20 12H1L16 1" stroke="#fff" strokeWidth="1.2" /></Svg>
        </Btn>
        <Btn w="w-[22px]"><StatusCaret /></Btn>
        <Btn w="w-[28px]">
          <Svg w={18} h={24}><path d="M1 3L17 21" stroke="#d46a6a" /><path d="M9 0V24" stroke="#4fb06f" /><rect x="7" y="10" width="4" height="4" stroke="#e3e5e8" /></Svg>
        </Btn>
        <Btn w="w-[22px]"><StatusCaret /></Btn>
        <Btn w="w-[29px]" on>
          <Svg w={20} h={20}><path d="M1 18H19" stroke="#fff" strokeWidth="1.6" /><path d="M3 15L15 2" stroke="#dce9f5" strokeWidth="1.4" /></Svg>
        </Btn>
        <div className="w-[1px] h-full" />
        <Btn w="w-[28px]" on>
          <Svg w={22} h={22}><rect x="4" y="4" width="17" height="17" stroke="#fff" /><rect x="1" y="1" width="6" height="6" fill="#5b8ec4" stroke="#fff" /></Svg>
        </Btn>
        <Btn w="w-[21px]"><StatusCaret /></Btn>
      </Group>
      <Group>
        <Btn w="w-[28.5px]" on>
          <Svg w={24} h={22}><g transform="translate(0 1)"><Aircraft fill="#fff" /></g><circle cx="20" cy="5" r="3" stroke="#fff" /></Svg>
        </Btn>
        <Btn w="w-[30px]">
          <Svg w={24} h={22}><g transform="translate(0 1)"><Aircraft /></g><polygon points="19,1 15,8 18,8 16,12 21,6 18,6" fill="#d8dbdf" /></Svg>
        </Btn>
        <Btn w="w-[31px]">
          <Svg w={18} h={22}><g transform="translate(0 1)"><Aircraft /></g></Svg>
        </Btn>
        <Btn w="w-[25px]"><span className="text-[14px] tracking-[-0.6px]">1:1</span></Btn>
        <Btn w="w-[17px]"><StatusCaret /></Btn>
      </Group>
      <Group>
        <Btn><FaCog className="w-[20px] h-[20px] text-[#d8dbdf]" /></Btn>
        <Btn w="w-[21px]"><StatusCaret /></Btn>
      </Group>
      <div className="-ml-[2px]">
        <Group>
          <Btn w="w-[30px]"><Plus size={24} strokeWidth={2.2} className="text-[#e3e5e8]" /></Btn>
        </Group>
      </div>
      <Group>
        <Btn w="w-[30px]">
          <Svg w={22} h={24}><rect x="1" y="1" width="8" height="8" stroke="#d8dbdf" /><circle cx="16" cy="11" r="4.5" stroke="#d8dbdf" /><polygon points="7,14 11,23 2,23" stroke="#d8dbdf" /></Svg>
        </Btn>
      </Group>
      <div className="w-[4px] h-[29px] bg-[#3b4453]" />
      <Group>
        <Btn w="w-[30px]">
          <Svg w={22} h={20}><rect x="1" y="1" width="20" height="18" fill="#565d69" stroke="#d8dbdf" /><path d="M13 7L18 3M18 3H14M18 3V7M9 13L4 17M4 17H8M4 17V13" stroke="#e3e5e8" /></Svg>
        </Btn>
        <Btn w="w-[30px]">
          <Svg w={20} h={20}><rect x="0" y="1" width="20" height="3" fill="#e3e5e8" /><rect x="0" y="8" width="20" height="3" fill="#e3e5e8" /><rect x="0" y="15" width="20" height="3" fill="#e3e5e8" /></Svg>
        </Btn>
      </Group>
    </div>
  </div>
);

export default function App() {
  return (
    <div className="w-[1915px] h-[967px] overflow-hidden flex bg-[#212830] font-['Open_Sans',sans-serif] text-[14px]">
      <div className="w-[1912px] h-full flex flex-col">
        <MenuBar />
        <Ribbon />
        <FileTabs />
        <div className="h-[5px] ml-[1px] w-[1908px] bg-[#3b4453]" />
        <Viewport />
        <div className="h-[4px] ml-[1px] w-[1908px] bg-[#3b4453]" />
        <StatusBar />
      </div>
      <div className="w-px h-full bg-[#1590d8]" />
    </div>
  );
}
